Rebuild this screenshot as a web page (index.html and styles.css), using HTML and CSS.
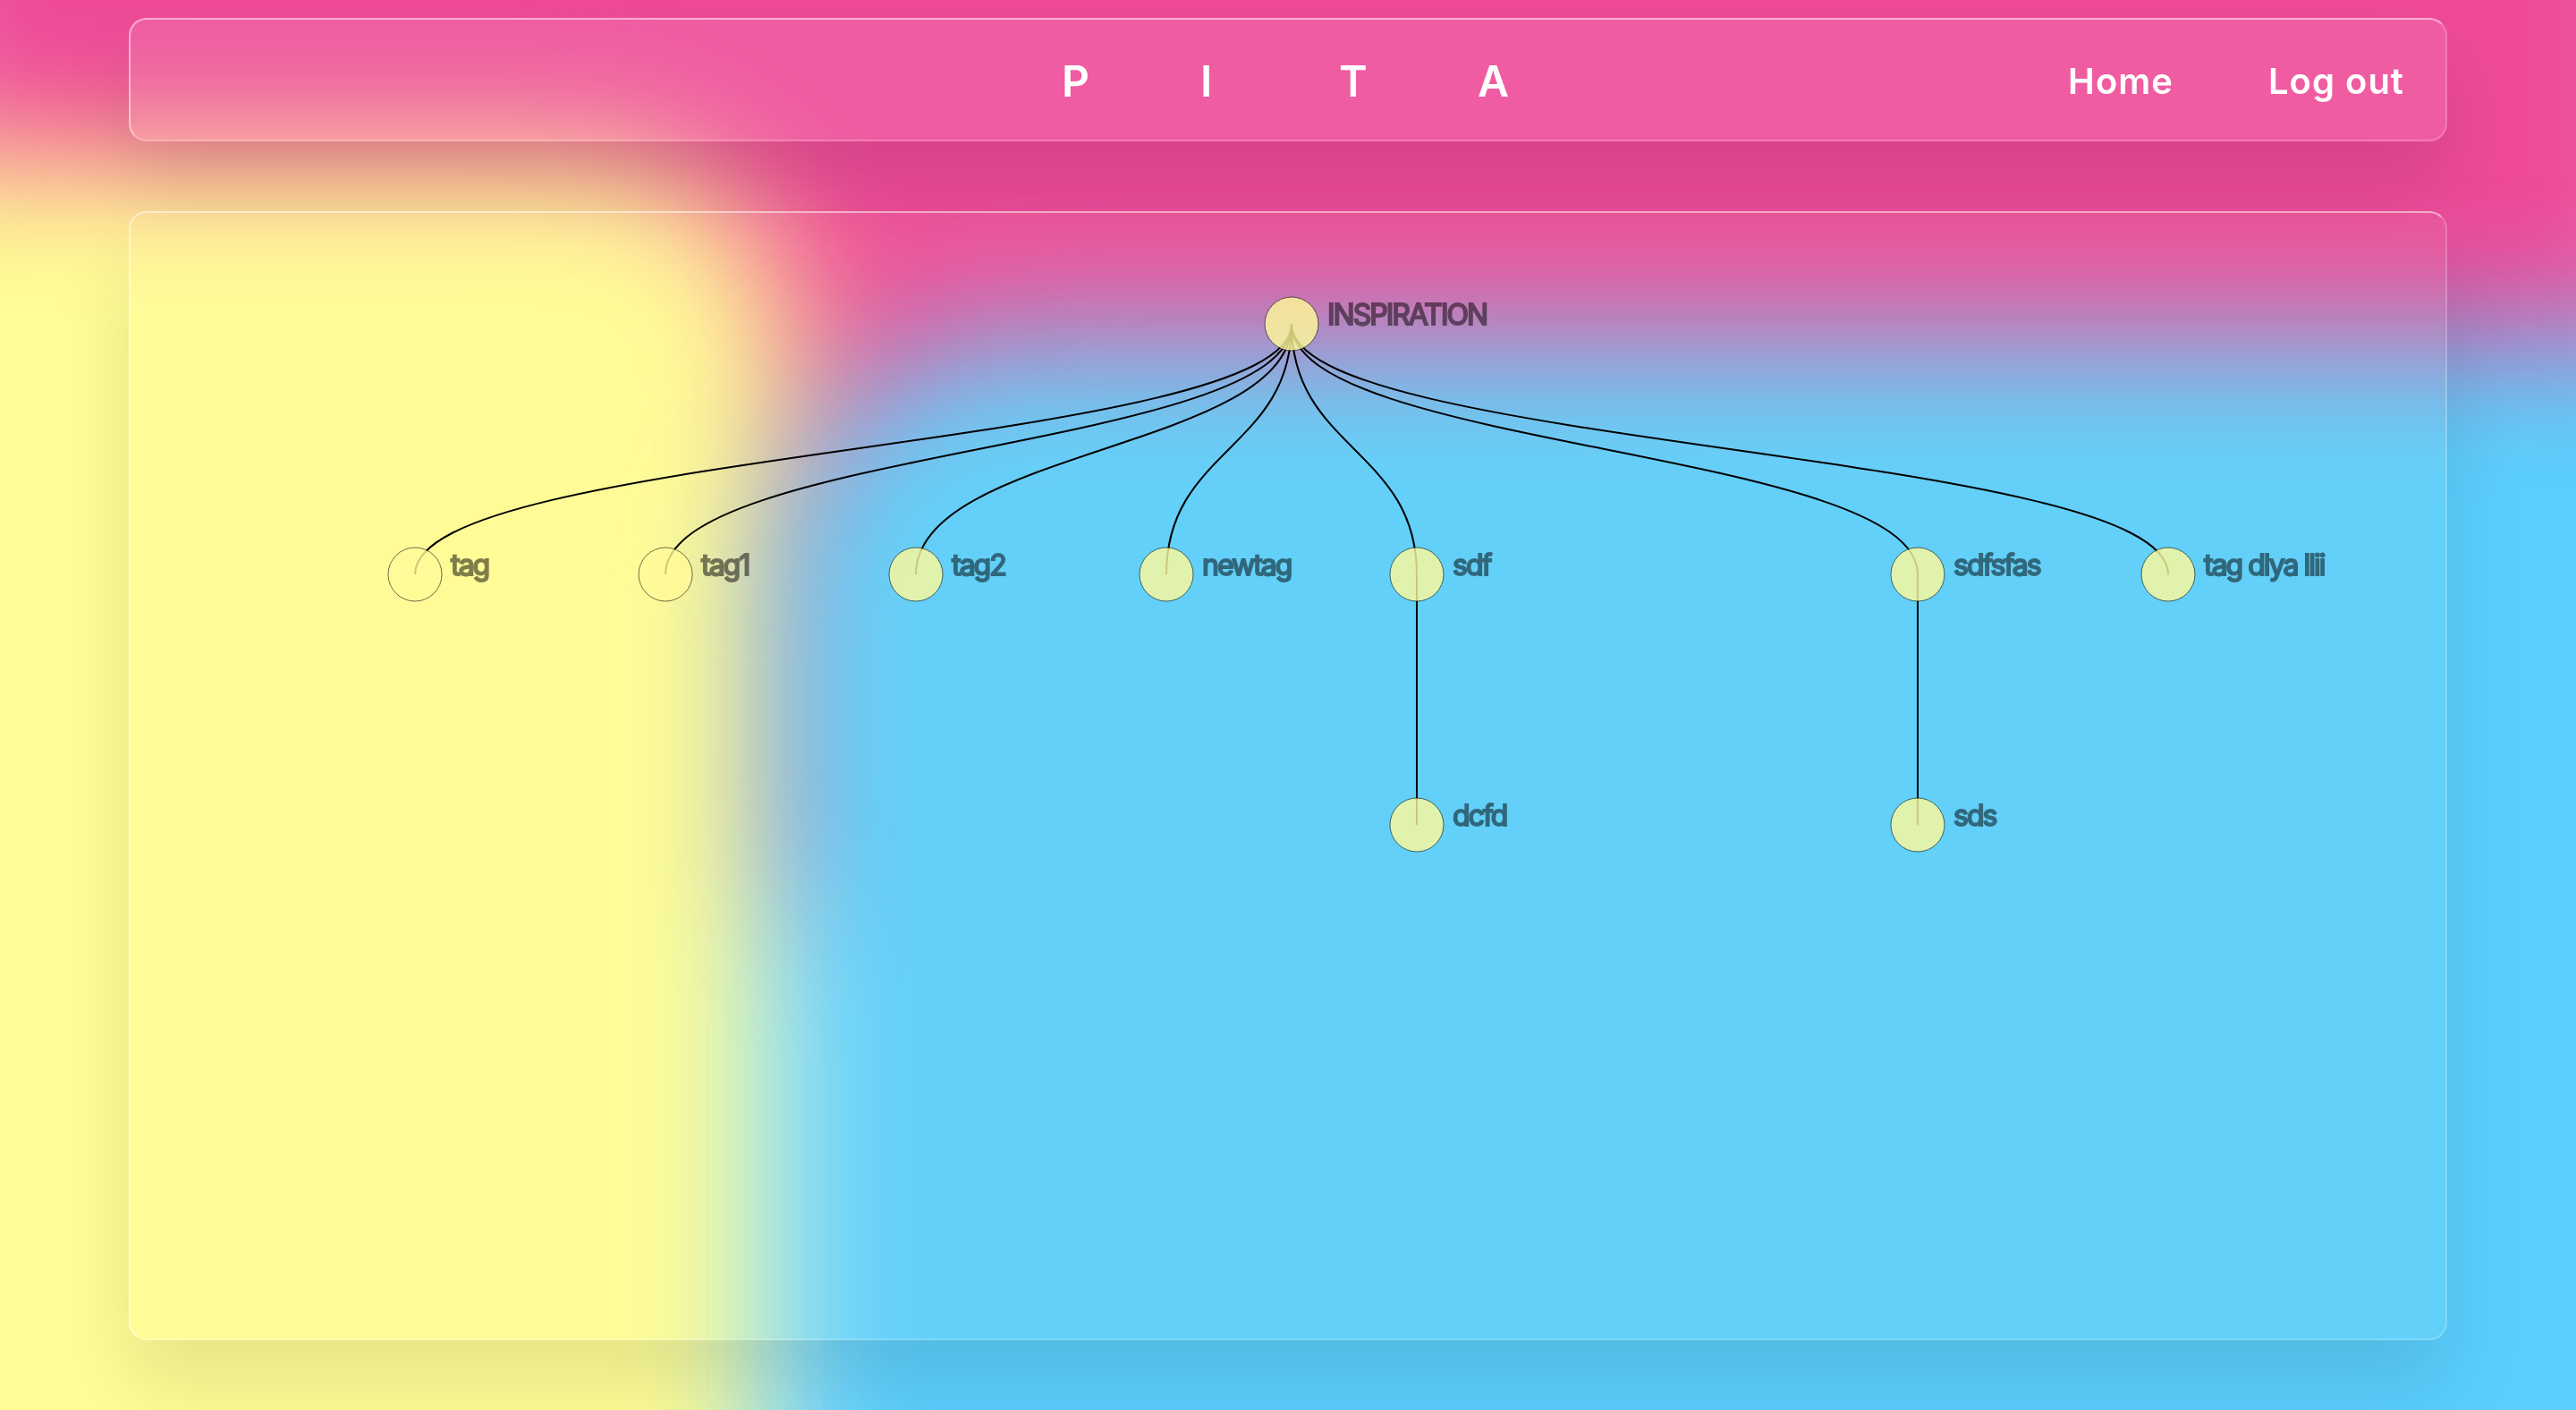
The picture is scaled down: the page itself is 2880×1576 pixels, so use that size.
FILE: index.html
```
<!DOCTYPE html>
<html lang="en">
<head>
<meta charset="utf-8">
<meta name="viewport" content="width=device-width, initial-scale=1">
<title>PITA</title>
<link rel="stylesheet" href="styles.css">
</head>
<body>
<div class="backdrop" aria-hidden="true">
  <div class="glow glow-pink"></div>
  <div class="glow glow-yellow"></div>
  <div class="glow glow-cyan"></div>
</div>
<div class="page">
  <header class="glass header">
    <h1 class="brand"><span>P</span><span>I</span><span>T</span><span>A</span></h1>
    <nav class="nav">
      <a class="nav-link" href="#home">Home</a>
      <a class="nav-link" href="#logout">Log out</a>
    </nav>
  </header>
  <main class="glass board">
    <svg class="tree" viewBox="0 0 2588 1258" preserveAspectRatio="xMidYMin meet" role="img" aria-label="Tag tree">
      <g class="links">
        <path d="M1298 124C1298 264 318 264 318 404"/>
        <path d="M1298 124C1298 264 598 264 598 404"/>
        <path d="M1298 124C1298 264 878 264 878 404"/>
        <path d="M1298 124C1298 264 1158 264 1158 404"/>
        <path d="M1298 124C1298 264 1438 264 1438 404"/>
        <path d="M1298 124C1298 264 1998 264 1998 404"/>
        <path d="M1298 124C1298 264 2278 264 2278 404"/>
        <path d="M1438 404V684"/>
        <path d="M1998 404V684"/>
      </g>
      <g class="nodes">
        <circle cx="1298" cy="124" r="30"/>
        <circle cx="318" cy="404" r="30"/>
        <circle cx="598" cy="404" r="30"/>
        <circle cx="878" cy="404" r="30"/>
        <circle cx="1158" cy="404" r="30"/>
        <circle cx="1438" cy="404" r="30"/>
        <circle cx="1998" cy="404" r="30"/>
        <circle cx="2278" cy="404" r="30"/>
        <circle cx="1438" cy="684" r="30"/>
        <circle cx="1998" cy="684" r="30"/>
      </g>
      <g class="labels">
        <text x="1338" y="125">INSPIRATION</text>
        <text x="358" y="405">tag</text>
        <text x="638" y="405">tag1</text>
        <text x="918" y="405">tag2</text>
        <text x="1198" y="405">newtag</text>
        <text x="1478" y="405">sdf</text>
        <text x="2038" y="405">sdfsfas</text>
        <text x="2318" y="405">tag dlya llii</text>
        <text x="1478" y="685">dcfd</text>
        <text x="2038" y="685">sds</text>
      </g>
    </svg>
  </main>
</div>
</body>
</html>
```
FILE: styles.css
```
* {
  box-sizing: border-box;
}

body {
  margin: 0;
  font-family: Inter, "Liberation Sans", sans-serif;
  background: #f1f6ff;
}

.backdrop {
  position: fixed;
  inset: 0;
  overflow: hidden;
  z-index: -1;
}

.glow {
  position: absolute;
  filter: blur(75px);
}

.glow-pink {
  inset: -300px -120px 35% -120px;
  background: #ee4a98;
}

.glow-yellow {
  inset: 11% 69% -300px -300px;
  border-top-right-radius: 240px;
  background: #fffd96;
}

.glow-cyan {
  inset: 24% -300px -300px 30%;
  border-top-left-radius: 280px;
  background: #5acffd;
}

.page {
  display: flex;
  flex-direction: column;
  gap: 78px;
  width: 90%;
  min-height: 100vh;
  margin: 0 auto;
  padding: 20px 0 78px;
}

.glass {
  border: 2px solid rgba(255, 255, 255, 0.2);
  border-top-color: rgba(255, 255, 255, 0.5);
  border-left-color: rgba(255, 255, 255, 0.5);
  border-radius: 20px;
  background: rgba(255, 255, 255, 0.1);
  box-shadow: 0 50px 90px rgba(0, 0, 0, 0.1);
}

.header {
  display: grid;
  grid-template-columns: 1fr auto 1fr;
  align-items: center;
  min-height: 138px;
  padding: 4px 46px 0;
}

.brand {
  display: grid;
  grid-template-columns: repeat(3, 155px) auto;
  grid-column: 2;
  margin: 0;
  padding-right: 6px;
  font-size: 48px;
  line-height: 60px;
  font-weight: 600;
  color: #fff;
}

.nav {
  display: flex;
  justify-content: flex-end;
  gap: 106px;
}

.nav-link {
  font-size: 40px;
  line-height: 48px;
  font-weight: 600;
  letter-spacing: 1px;
  color: #fff;
  text-decoration: none;
}

.board {
  flex: 1;
  background: rgba(255, 240, 180, 0.06);
}

.tree {
  display: block;
  width: 100%;
}

.links {
  fill: none;
  stroke: #000;
  stroke-width: 2px;
}

.nodes circle {
  fill: #fffb99;
  stroke: rgba(0, 0, 0, 0.7);
  stroke-width: 1px;
  opacity: 0.8;
}

.labels {
  font-size: 32px;
  letter-spacing: -2px;
  stroke: #000;
  stroke-width: 2px;
  opacity: 0.5;
}
```
